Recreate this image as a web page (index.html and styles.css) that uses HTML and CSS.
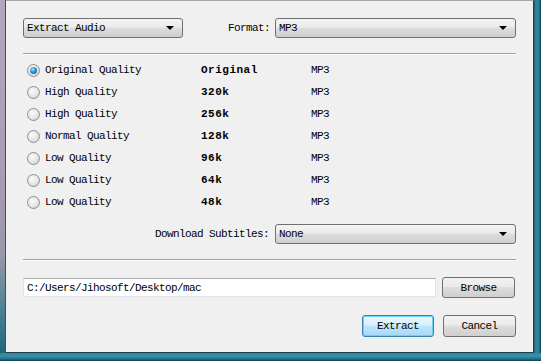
FILE: index.html
```html
<!DOCTYPE html>
<html>
<head>
<meta charset="utf-8">
<link rel="stylesheet" href="styles.css">
</head>
<body>
<div class="frame">
  <div class="edge-left"></div>
  <div class="panel">
    <div class="row-top">
      <div class="select sel-mode"><span>Extract Audio</span><i class="arrow"></i></div>
      <span class="lbl-format">Format:</span>
      <div class="select sel-format"><span>MP3</span><i class="arrow"></i></div>
    </div>
    <div class="hr hr1"></div>
    <div class="list">
      <div class="opt"><span class="radio checked"></span><span class="q">Original Quality</span><b class="br">Original</b><span class="fmt">MP3</span></div>
      <div class="opt"><span class="radio"></span><span class="q">High Quality</span><b class="br">320k</b><span class="fmt">MP3</span></div>
      <div class="opt"><span class="radio"></span><span class="q">High Quality</span><b class="br">256k</b><span class="fmt">MP3</span></div>
      <div class="opt"><span class="radio"></span><span class="q">Normal Quality</span><b class="br">128k</b><span class="fmt">MP3</span></div>
      <div class="opt"><span class="radio"></span><span class="q">Low Quality</span><b class="br">96k</b><span class="fmt">MP3</span></div>
      <div class="opt"><span class="radio"></span><span class="q">Low Quality</span><b class="br">64k</b><span class="fmt">MP3</span></div>
      <div class="opt"><span class="radio"></span><span class="q">Low Quality</span><b class="br">48k</b><span class="fmt">MP3</span></div>
    </div>
    <div class="row-sub">
      <span class="lbl-sub">Download Subtitles:</span>
      <div class="select sel-sub"><span>None</span><i class="arrow"></i></div>
    </div>
    <div class="hr hr2"></div>
    <div class="row-path">
      <div class="path">C:/Users/Jihosoft/Desktop/mac</div>
      <div class="btn">Browse</div>
    </div>
    <div class="row-btns">
      <div class="btn default">Extract</div>
      <div class="btn">Cancel</div>
    </div>
  </div>
  <div class="edge-right"></div>
  <div class="edge-bottom"></div>
</div>
</body>
</html>
```

FILE: styles.css
```css
html, body {
  margin: 0;
  padding: 0;
  background: #2a7890;
}
body {
  font-family: "Liberation Mono", "DejaVu Sans Mono", monospace;
  font-size: 11px;
  letter-spacing: -0.6px;
  color: #000;
}
.frame {
  width: 541px;
  height: 361px;
  display: grid;
  grid-template-columns: 6px 528px 7px;
  grid-template-rows: 353px 8px;
  background: #2a7890;
}
.edge-left {
  background: linear-gradient(to bottom, #b3a6bd 0%, #a99bb2 50%, #9a98a8 72%, #4a8294 88%, #1e667c 100%);
  border-right: 1px solid #4a4a5a;
}
.edge-right {
  background: linear-gradient(to right, #1b5a70 0px, #2f86a0 2px, #2a7a92 5px, #0f3c4c 7px);
}
.edge-bottom {
  grid-column: 1 / 4;
  background: linear-gradient(to bottom, #2f86a0 0px, #3a90a8 3px, #236e86 6px, #0f3c4c 8px);
}
.panel {
  background: #f0f0f0;
  border-top: 1px solid #a8a8a8;
  border-right: 1px solid #1d3d48;
  border-bottom: 1px solid #1d3d48;
  box-sizing: border-box;
  padding: 17px 16px 0 17px;
  display: flex;
  flex-direction: column;
}
.select {
  height: 20px;
  box-sizing: border-box;
  border: 1px solid #707070;
  border-radius: 3px;
  background: linear-gradient(to bottom, #f3f3f3 0%, #ebebeb 45%, #dddddd 50%, #cfcfcf 100%);
  display: flex;
  align-items: center;
  padding: 0 8px 0 3px;
  justify-content: space-between;
}
.arrow {
  width: 0;
  height: 0;
  border-left: 4px solid transparent;
  border-right: 4px solid transparent;
  border-top: 4px solid #000;
}
.row-top {
  display: flex;
  align-items: center;
  height: 20px;
}
.sel-mode { width: 160px; }
.lbl-format {
  width: 92px;
  text-align: right;
  padding-right: 5px;
  box-sizing: border-box;
}
.sel-format { width: 241px; }
.hr {
  height: 2px;
  box-sizing: border-box;
  border-top: 1px solid #a0a0a0;
  border-bottom: 1px solid #ffffff;
  width: 493px;
}
.hr1 { margin-top: 15px; }
.list {
  margin-top: 4px;
  display: flex;
  flex-direction: column;
}
.opt {
  height: 22px;
  display: flex;
  align-items: center;
}
.radio {
  width: 13px;
  height: 13px;
  box-sizing: border-box;
  border-radius: 50%;
  border: 1px solid #8e8f8f;
  background: radial-gradient(circle at 40% 35%, #fbfbfb 0%, #e4e4e4 55%, #c8c8c8 100%);
  margin-left: 4px;
  margin-right: 5px;
  display: flex;
  align-items: center;
  justify-content: center;
}
.radio.checked::after {
  content: "";
  width: 7px;
  height: 7px;
  border-radius: 50%;
  background: radial-gradient(circle at 40% 35%, #a8e4ff 0%, #2a8fd8 45%, #0b4f8f 100%);
}
.q { width: 156px; }
.br {
  width: 110px;
  font-weight: bold;
  letter-spacing: 0.5px;
}
.row-sub {
  margin-top: 11px;
  display: flex;
  align-items: center;
  height: 20px;
}
.lbl-sub {
  width: 252px;
  text-align: right;
  padding-right: 6px;
  box-sizing: border-box;
}
.sel-sub { width: 241px; }
.hr2 { margin-top: 15px; }
.row-path {
  margin-top: 16px;
  display: flex;
  align-items: center;
  height: 21px;
}
.path {
  width: 413px;
  height: 19px;
  box-sizing: border-box;
  background: #fff;
  border: 1px solid #e2e3ea;
  border-top-color: #abadb3;
  display: flex;
  align-items: center;
  padding-left: 3px;
  margin-right: 6px;
}
.btn {
  width: 73px;
  height: 21px;
  box-sizing: border-box;
  border: 1px solid #707070;
  border-radius: 3px;
  background: linear-gradient(to bottom, #f2f2f2 0%, #ebebeb 45%, #dddddd 50%, #cfcfcf 100%);
  display: flex;
  align-items: center;
  justify-content: center;
}
.row-btns {
  margin-top: 17px;
  display: flex;
  justify-content: flex-end;
  gap: 9px;
  width: 493px;
}
.row-btns .btn { height: 22px; }
.btn.default {
  width: 72px;
  border-color: #3c7fb1;
  background: linear-gradient(to bottom, #eaf6fd 0%, #d9f0fc 45%, #bee6fd 50%, #a7d9f5 100%);
  box-shadow: inset 0 0 0 1px #6fd0f7;
}
```
